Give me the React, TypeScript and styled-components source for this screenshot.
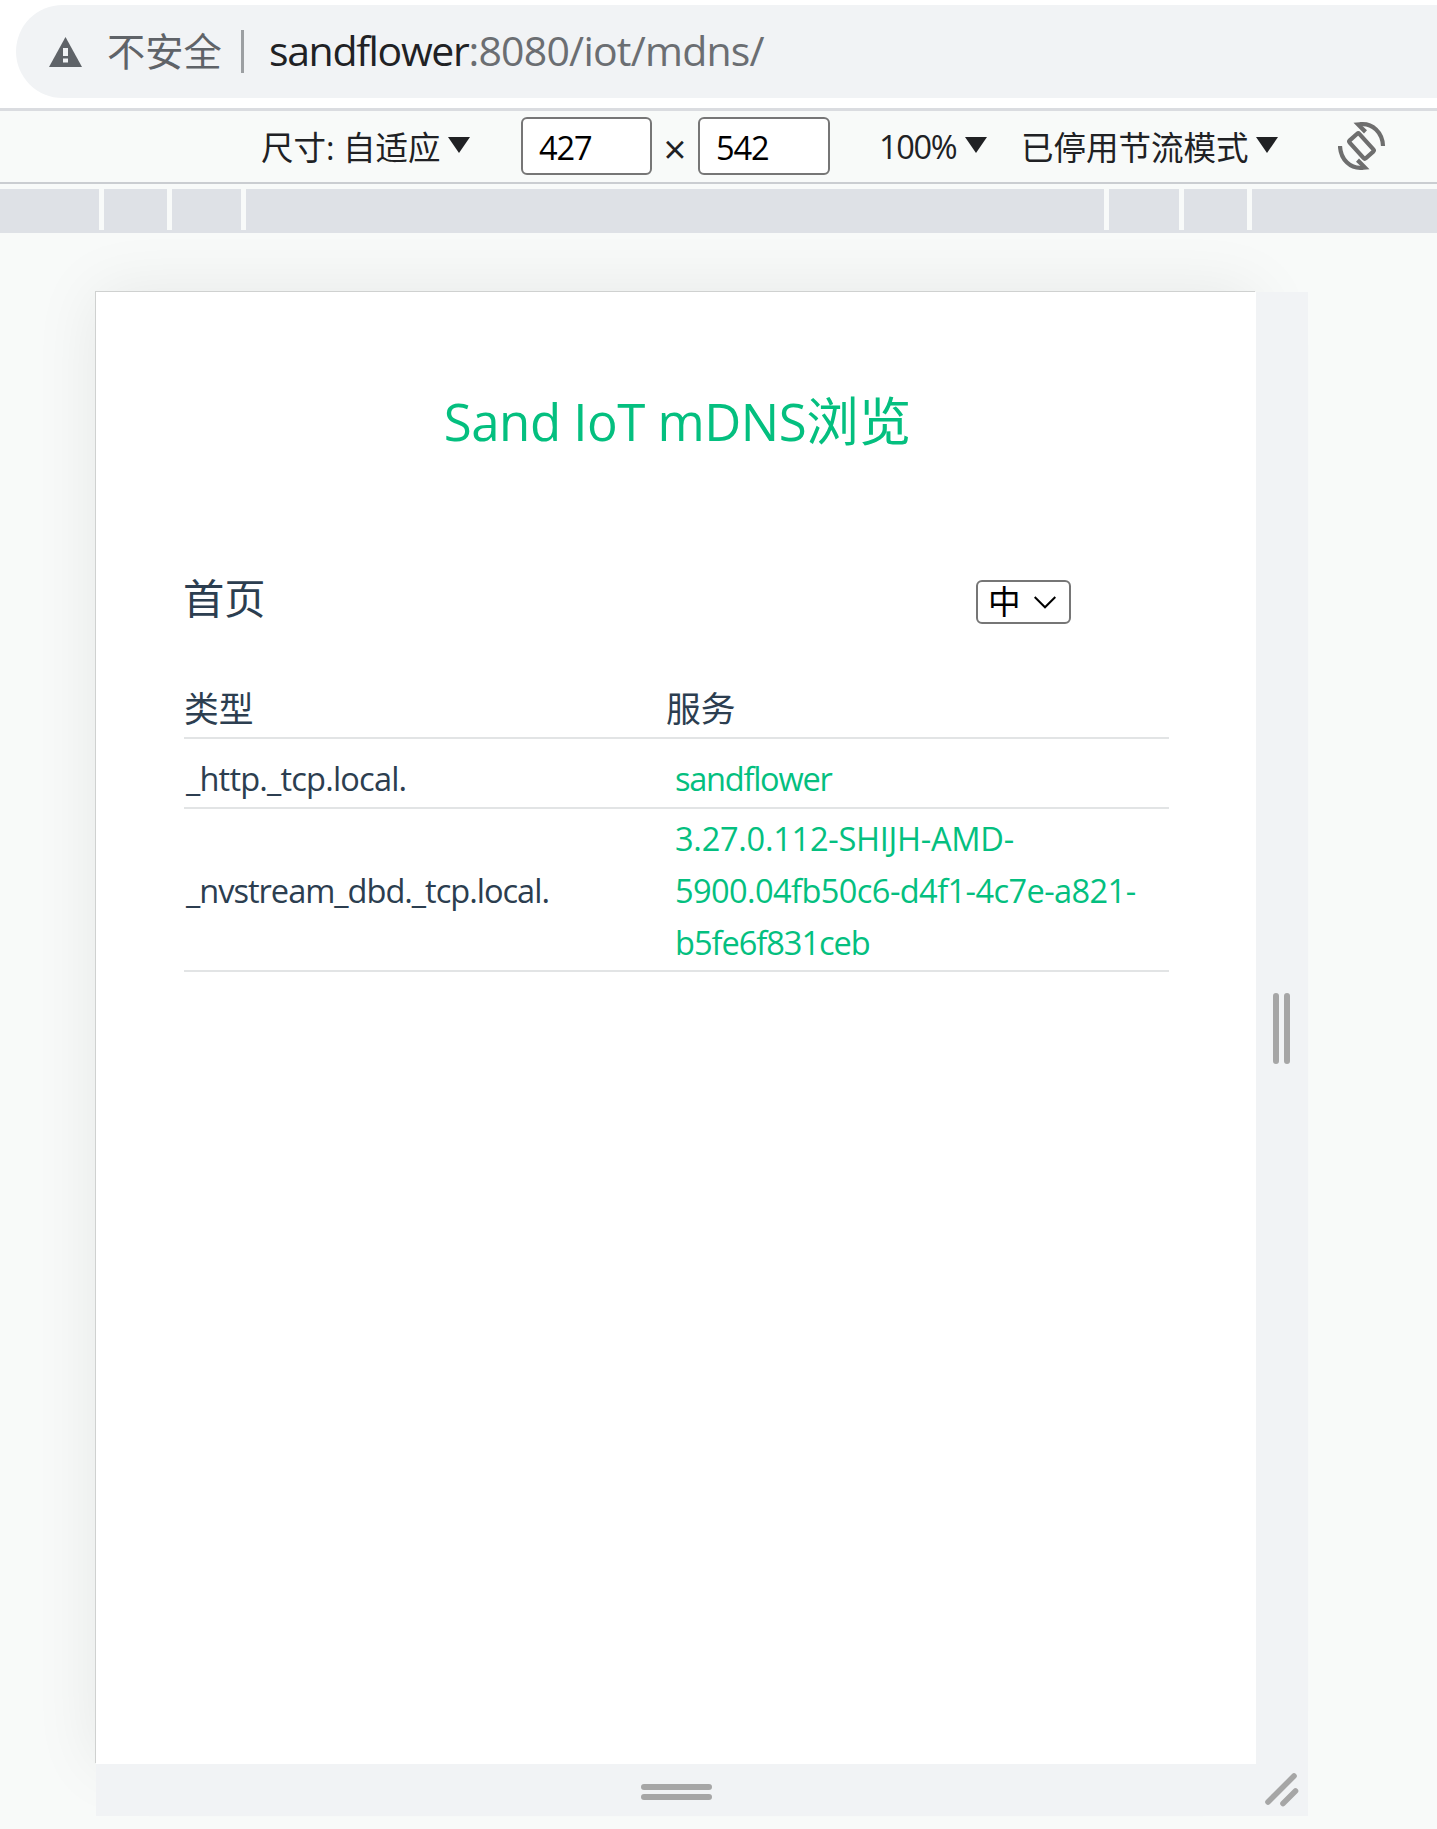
import React from 'react';
import styled, { createGlobalStyle } from 'styled-components';

const latin = '"Open Sans", "Noto Sans CJK SC", sans-serif';

const GlobalStyle = createGlobalStyle`
  *, *::before, *::after { box-sizing: border-box; }
  html, body { margin: 0; padding: 0; background: #f8faf9; }
  body { font-family: ${latin}; overflow: hidden; }
`;

const Screen = styled.div`
  width: 1437px;
  height: 1829px;
  display: flex;
  flex-direction: column;
  overflow: hidden;
  background: #f8faf9;
`;

/* Address bar */
const AddressBar = styled.header`
  flex: none;
  height: 111px;
  padding: 5px 0 0 16px;
  background: #fff;
  border-bottom: 3px solid #dadce0;
`;

const Omnibox = styled.div`
  height: 93px;
  display: flex;
  align-items: center;
  padding-left: 33px;
  background: #f1f3f5;
  border-radius: 47px 0 0 47px;
`;

const Security = styled.span`
  width: 133px;
  margin-left: 25px;
  padding-bottom: 1px;
  font-size: 38.2px;
  line-height: 92px;
  color: #5f6368;
  white-space: nowrap;
`;

const Separator = styled.span`
  width: 3px;
  height: 43px;
  margin: 0 25px 1px 1px;
  background: #9c9fa2;
`;

const Address = styled.div`
  display: flex;
  padding-bottom: 3px;
`;

const Text = styled.span<{ $size: number; $spacing?: number; $color?: string }>`
  font-size: ${(p) => p.$size}px;
  letter-spacing: ${(p) => p.$spacing ?? 0}px;
  color: ${(p) => p.$color ?? 'inherit'};
  white-space: nowrap;
`;

/* Device toolbar */
const Toolbar = styled.div`
  flex: none;
  height: 73px;
  display: flex;
  align-items: center;
  padding-left: 261px;
  border-bottom: 2px solid #cacdd1;
  color: #202124;
  font-size: 32.5px;
`;

const Dropdown = styled.div<{ $width: number; $before?: number; $after: number }>`
  width: ${(p) => p.$width}px;
  flex: none;
  display: flex;
  align-items: center;
  justify-content: space-between;
  margin: 0 ${(p) => p.$after}px 1px ${(p) => p.$before ?? 0}px;
  white-space: nowrap;
`;

const Arrow = styled.i`
  flex: none;
  margin-bottom: 3px;
  border: solid transparent;
  border-width: 16px 11px 0;
  border-top-color: #202124;
`;

const SizeField = styled.input<{ $width: number }>`
  flex: none;
  width: ${(p) => p.$width}px;
  height: 58px;
  margin-bottom: 2px;
  padding: 3px 0 0 16px;
  border: 2px solid #767676;
  border-radius: 6px;
  background: #fff;
  color: #000;
  font-family: ${latin};
  font-size: 32.6px;
  letter-spacing: -1.1px;
`;

const Times = styled.span`
  width: 46px;
  padding-top: 5px;
  text-align: center;
  font-size: 40px;
  line-height: 54px;
`;

const RotateIcon = styled.svg`
  width: 48px;
  height: 50px;
  flex: none;
`;

/* Breakpoint ruler */
const Ruler = styled.div`
  flex: none;
  height: 44px;
  margin-top: 5px;
  display: flex;
  gap: 5px;
  background: #f8faf9;
  border-bottom: 3px solid #dee1e6;
`;

const Breakpoint = styled.div<{ $width?: number }>`
  flex: ${(p) => (p.$width ? `0 0 ${p.$width}px` : '1')};
  background: #dee1e6;
`;

/* Emulated device */
const Stage = styled.main`
  flex: 1;
  overflow: hidden;
  padding: 59px 0 0 96px;
`;

const Device = styled.div`
  display: grid;
  grid-template: 1472px 52px / 1160px 52px;
`;

const Page = styled.section`
  background: #fff;
  padding: 89px 87px 0 88px;
  color: #2c3e50;
  box-shadow: -1px -1px 0 #cfd1d0, 0 0 62px rgba(0, 0, 0, 0.08);
`;

const Handle = styled.div<{ $column?: boolean }>`
  display: flex;
  flex-direction: ${(p) => (p.$column ? 'column' : 'row')};
  align-items: center;
  justify-content: center;
  gap: ${(p) => (p.$column ? 4 : 5)}px;
  padding: ${(p) => (p.$column ? '4px 0 0' : '0 2px 0 0')};
  background: #f1f3f5;
`;

const Corner = styled.div`
  background: #f1f3f5;
`;

const Grip = styled.i<{ $w: number; $h: number }>`
  width: ${(p) => p.$w}px;
  height: ${(p) => p.$h}px;
  border-radius: 3px;
  background: #a6a6a6;
`;

const Title = styled.h1`
  margin: 0;
  height: 80px;
  padding-left: 2px;
  line-height: 80px;
  text-align: center;
  font-weight: 400;
  font-size: 51px;
  letter-spacing: -0.5px;
  color: #04bf7f;
  white-space: nowrap;
`;

const NavRow = styled.nav`
  margin-top: 108px;
  height: 64px;
  display: flex;
  align-items: center;
  justify-content: space-between;
  padding-right: 98px;
`;

const HomeLink = styled.a`
  margin: 0 0 11px -1px;
  font-size: 41.3px;
`;

const Language = styled.div`
  width: 95px;
  height: 44px;
  margin-top: 2px;
  padding: 0 13px 0 10px;
  display: flex;
  align-items: center;
  justify-content: space-between;
  border: 2px solid #767676;
  border-radius: 6px;
  color: #000;
  font-size: 32.6px;
  line-height: 38px;
`;

const Row = styled.div<{ $height: number; $head?: boolean; $top?: number }>`
  height: ${(p) => p.$height}px;
  padding-top: ${(p) => p.$top ?? 0}px;
  display: grid;
  grid-template-columns: ${(p) => (p.$head ? '482px 1fr' : '490px 1fr')};
  align-items: center;
  border-bottom: 2px solid #e2e4e5;
  font-size: ${(p) => (p.$head ? 34.8 : 32.6)}px;
  line-height: 52px;
`;

const TypeCell = styled.div`
  padding-left: 2px;
`;

const Links = styled.div`
  display: flex;
  flex-direction: column;
  padding-left: 1px;
  color: #04bf7f;
`;

export default function App() {
  return (
    <>
      <GlobalStyle />
      <Screen>
        <AddressBar>
          <Omnibox>
            <svg width="33" height="30" viewBox="0 0 33 30">
              <path d="M16.5 0 33 30H0z" fill="#5f6368" />
              <path d="M14 11h5v8h-5zM14 21.5h5v4h-5z" fill="#f1f3f5" />
            </svg>
            <Security>不安全</Security>
            <Separator />
            <Address>
              <Text $size={41} $spacing={-1.35} $color="#202124">sandflower</Text>
              <Text $size={41} $spacing={-0.77} $color="#6b6e72">:8080/iot/mdns/</Text>
            </Address>
          </Omnibox>
        </AddressBar>

        <Toolbar>
          <Dropdown $width={209} $after={51}>
            <span>尺寸: 自适应</span>
            <Arrow />
          </Dropdown>
          <SizeField $width={131} defaultValue="427" />
          <Times>×</Times>
          <SizeField $width={132} defaultValue="542" />
          <Dropdown $width={108} $before={49} $after={34}>
            <Text $size={32.5} $spacing={-1.3}>100%</Text>
            <Arrow />
          </Dropdown>
          <Dropdown $width={257} $after={60}>
            <span>已停用节流模式</span>
            <Arrow />
          </Dropdown>
          <RotateIcon viewBox="0 0 48 50" fill="none" stroke="#6e6e6e" strokeWidth="4.200">
            <path d="M22 2.300C34.500 .8 44.500 10.500 45 24" />
            <path d="M25 45.700C12.500 47.200 2.500 37.500 2 24" />
            <path d="M15.500 .8 25 0 24.500 4 29 8.300 26 11.400Z" fill="#6e6e6e" stroke="none" />
            <path d="M31.500 47.200 22 48 22.500 44 18 39.700 21 36.600Z" fill="#6e6e6e" stroke="none" />
            <rect x="17" y="12" width="13" height="24" rx="1.500" transform="rotate(-42 23.500 24)" />
          </RotateIcon>
        </Toolbar>

        <Ruler>
          <Breakpoint $width={99} />
          <Breakpoint $width={63} />
          <Breakpoint $width={69} />
          <Breakpoint $width={858} />
          <Breakpoint $width={70} />
          <Breakpoint $width={63} />
          <Breakpoint />
        </Ruler>

        <Stage>
          <Device>
            <Page>
              <Title>
                Sand IoT mDNS<Text $size={52.5}>浏览</Text>
              </Title>
              <NavRow>
                <HomeLink>首页</HomeLink>
                <Language>
                  中
                  <svg width="22" height="13" viewBox="0 0 22 13" fill="none" stroke="#000" strokeWidth="2">
                    <path d="M.7 1 11 11.300 21.300 1" />
                  </svg>
                </Language>
              </NavRow>
              <Row $height={106} $top={48} $head>
                <div>类型</div>
                <div>服务</div>
              </Row>
              <Row $height={70} $top={12}>
                <TypeCell><Text $size={32.6} $spacing={-0.82}>_http._tcp.local.</Text></TypeCell>
                <Links><Text $size={32.6} $spacing={-1.27}>sandflower</Text></Links>
              </Row>
              <Row $height={163} $top={2}>
                <TypeCell><Text $size={32.6} $spacing={-1.02}>_nvstream_dbd._tcp.local.</Text></TypeCell>
                <Links>
                  <Text $size={32.6} $spacing={-0.28}>3.27.0.112-SHIJH-AMD-</Text>
                  <Text $size={32.6} $spacing={-0.6}>5900.04fb50c6-d4f1-4c7e-a821-</Text>
                  <Text $size={32.6} $spacing={-1.03}>b5fe6f831ceb</Text>
                </Links>
              </Row>
            </Page>
            <Handle>
              <Grip $w={6} $h={71} />
              <Grip $w={6} $h={71} />
            </Handle>
            <Handle $column>
              <Grip $w={71} $h={6} />
              <Grip $w={71} $h={6} />
            </Handle>
            <Corner>
              <svg width="52" height="52" viewBox="0 0 52 52" stroke="#a6a6a6" strokeWidth="5.600" strokeLinecap="round">
                <path d="M12 38 38 12M27 39.500 39.500 27" />
              </svg>
            </Corner>
          </Device>
        </Stage>
      </Screen>
    </>
  );
}
